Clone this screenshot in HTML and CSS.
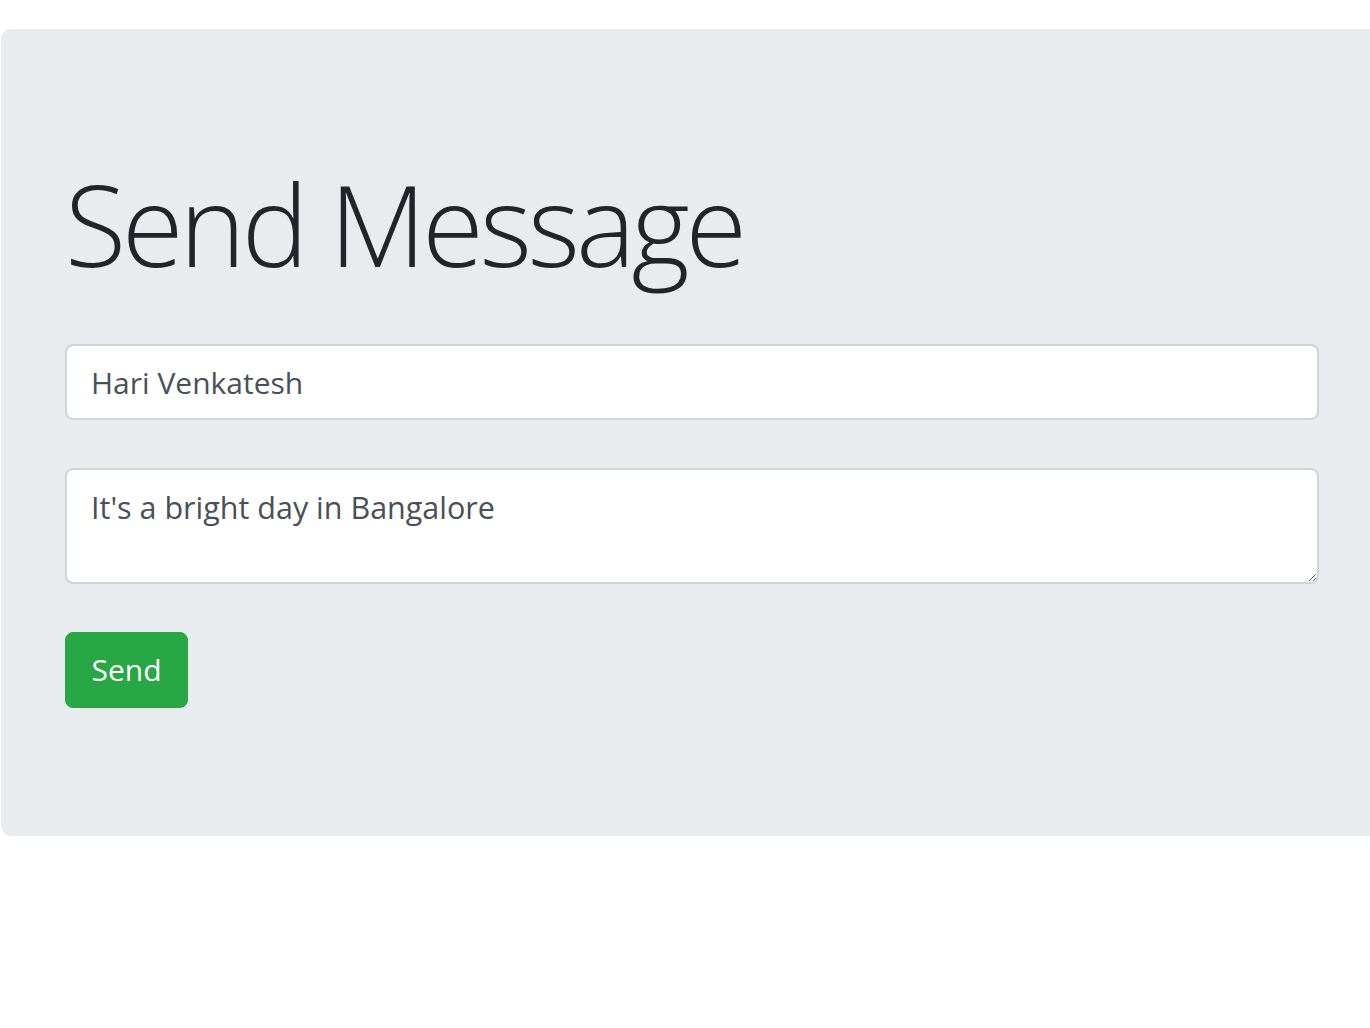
FILE: index.html
```html
<!DOCTYPE html>
<html lang="en">
<head>
<meta charset="utf-8">
<title>Send Message</title>
<link rel="stylesheet" href="styles.css">
</head>
<body>
<div class="jumbotron">
  <h1 class="display">Send Message</h1>
  <form class="msg-form">
    <div class="form-group">
      <input class="form-control" type="text" value="Hari Venkatesh">
    </div>
    <div class="form-group">
      <textarea class="form-control text-area">It's a bright day in Bangalore</textarea>
    </div>
    <button type="button" class="btn-send">Send</button>
  </form>
</div>
</body>
</html>
```

FILE: styles.css
```css
html, body {
  margin: 0;
  padding: 0;
  overflow: hidden;
  background: #fff;
}
body {
  padding: 29px 0 0 1px;
  font-family: "Open Sans", "Noto Sans", sans-serif;
  color: #212529;
}
.jumbotron {
  background: #e9ecef;
  border-radius: 10px;
  padding: 128px 64px 128px 64px;
  margin-right: -13px;
}
.display {
  margin: 0 0 53px 0;
  font-size: 112px;
  font-weight: 300;
  line-height: 134px;
  color: #212529;
  letter-spacing: -4px;
}
.form-group {
  margin-bottom: 48px;
}
.form-control {
  display: block;
  box-sizing: border-box;
  width: 100%;
  height: 76px;
  padding: 13px 24px 12px;
  font-family: inherit;
  font-size: 30px;
  line-height: 48px;
  color: #495057;
  background: #fff;
  border: 2px solid #ced4da;
  border-radius: 8px;
  outline: none;
  margin: 0;
}
.text-area {
  height: 116px;
  font-size: 30.5px;
  resize: vertical;
}
.btn-send {
  display: inline-block;
  height: 76px;
  width: 123px;
  padding: 0;
  font-family: inherit;
  font-size: 30px;
  line-height: 48px;
  color: #fff;
  background: #28a745;
  border: 1px solid #28a745;
  border-radius: 8px;
}
```
